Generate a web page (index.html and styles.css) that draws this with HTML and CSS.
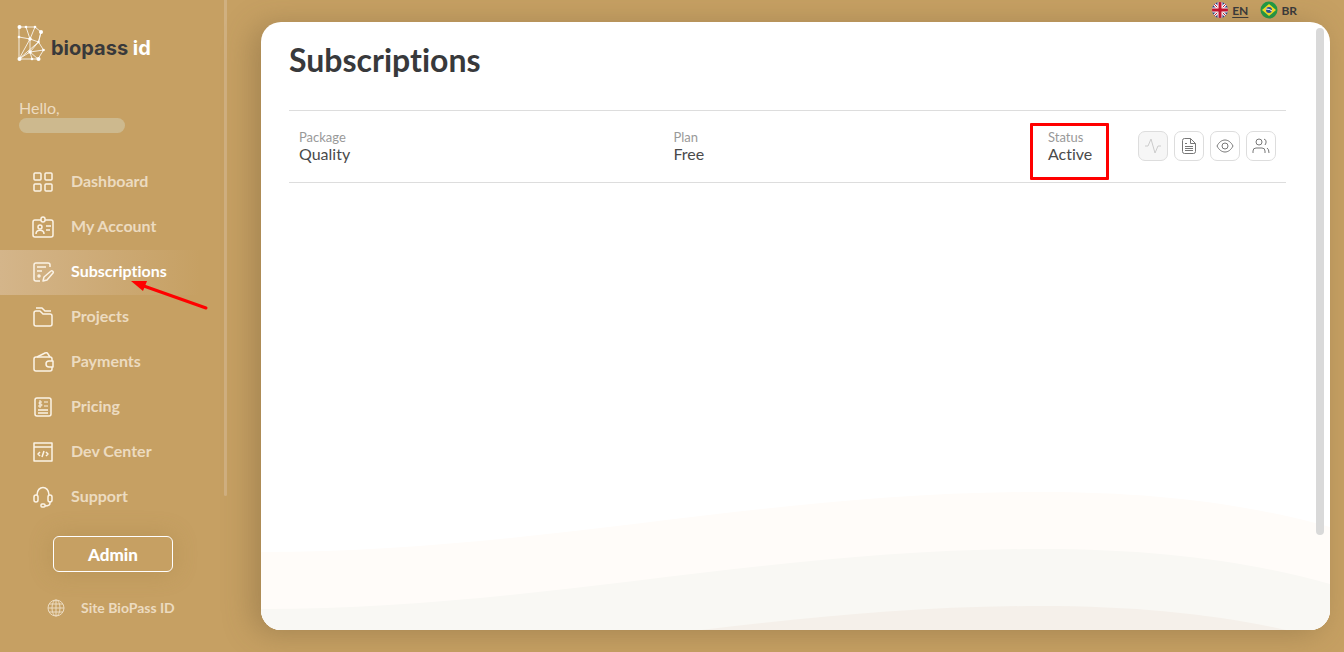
FILE: index.html
```html
<!DOCTYPE html>
<html lang="en">

<head>
    <meta charset="UTF-8">
    <meta name="viewport" content="width=device-width, initial-scale=1.0">
    <title>Subscriptions - BioPass ID</title>
    <link rel="stylesheet" href="styles.css">
</head>

<body>
    <aside class="sidebar">
        <a class="logo" href="#">
            <svg class="logo-mark" viewBox="0 0 28 38" aria-hidden="true">
                <path d="M2 3H18L24 8L21.500 18L26.500 26L21 35H2ZM2 13L13 15L9 3M2 35L13 15L18 3M13 15L21.500 18L2 35L13 28L26.500 26M13 15V28L15 35M13 28L21 35M13 28L21.500 18L24 8" fill="none" stroke="#fff" stroke-opacity=".8" stroke-width="1"/>
                <g fill="#fff">
                    <circle cx="2.500" cy="3" r="2"/><circle cx="9" cy="3" r="1.300"/><circle cx="18" cy="3" r="1.300"/><circle cx="24" cy="8" r="2"/>
                    <circle cx="2" cy="13" r="1.300"/><circle cx="13" cy="15" r="1.800"/><circle cx="21.500" cy="18" r="1.200"/><circle cx="26.500" cy="26" r="1.300"/>
                    <circle cx="13" cy="28" r="1.800"/><circle cx="2.500" cy="35" r="2"/><circle cx="15" cy="35" r="1.300"/><circle cx="21.500" cy="35" r="2"/>
                </g>
            </svg>
            <span class="logo-text">biopass <span>id</span></span>
        </a>

        <div class="user">
            <p>Hello,</p>
            <div class="user-name"></div>
        </div>

        <nav class="menu">
            <a href="#">
                <svg viewBox="0 0 22 22"><rect x="2" y="2" width="7" height="7" rx="1"/><rect x="13" y="2" width="7" height="7" rx="1"/><rect x="2" y="13" width="7" height="7" rx="1"/><rect x="13" y="13" width="7" height="7" rx="1"/></svg>
                Dashboard
            </a>
            <a href="#">
                <svg viewBox="0 0 22 22"><path d="M9 4H3a2 2 0 0 0-2 2v13a2 2 0 0 0 2 2h16a2 2 0 0 0 2-2V6a2 2 0 0 0-2-2h-6"/><rect x="9" y="1" width="4" height="5" rx="2"/><circle cx="8" cy="11" r="2"/><path d="M4 18c0-5 8-5 8 0M14 10h5M14 14h4"/></svg>
                My Account
            </a>
            <a href="#" class="active">
                <svg viewBox="0 0 22 22"><path d="M18 6V4a2 2 0 0 0-2-2H4a2 2 0 0 0-2 2v14a2 2 0 0 0 2 2h4M5 6h9M5 10h5"/><circle cx="7" cy="15" r="1"/><path d="M11 20l1-4 7-6c1-1 3 1 2 2l-6 7z"/></svg>
                Subscriptions
                <svg class="arrow" viewBox="0 0 78 30" aria-hidden="true"><path class="arrow-line" d="M10 5L75 28"/><path class="arrow-head" d="M0 1L16 1L12 11Z"/></svg>
            </a>
            <a href="#">
                <svg viewBox="0 0 22 22"><path d="M2 7a2 2 0 0 1 2-2h4l3 3h7a2 2 0 0 1 2 2v8a2 2 0 0 1-2 2H4a2 2 0 0 1-2-2zM4 2h6l3 3h6"/></svg>
                Projects
            </a>
            <a href="#">
                <svg viewBox="0 0 22 22"><rect x="2" y="6" width="18" height="14" rx="2"/><path d="M5 6l8-4q2-1 3 1l2 3"/><path class="pouch" d="M21 10v6h-4a3 3 0 0 1 0-6z"/></svg>
                Payments
            </a>
            <a href="#">
                <svg viewBox="0 0 22 22"><rect x="3" y="2" width="16" height="18" rx="2"/><path d="M6 14h10M6 17h10"/><path class="thin" d="M10 6H8a1 1 0 0 0-1 1q0 1 1 1h1q1 0 1 1t-1 1H6M8 4v8M12 6h4M12 10h4"/></svg>
                Pricing
            </a>
            <a href="#">
                <svg viewBox="0 0 22 22"><rect x="2" y="2" width="18" height="18"/><path d="M2 6h18M8 11l-2 2 2 2M14 11l2 2-2 2M12 10l-2 6"/></svg>
                Dev Center
            </a>
            <a href="#">
                <svg viewBox="0 0 22 22"><path d="M5 9c0-10 12-10 12 0M18 15v2q0 3-5 3"/><rect x="2" y="9" width="4" height="7" rx="2"/><rect x="16" y="9" width="4" height="7" rx="2"/><rect x="9" y="18" width="4" height="3" rx="1"/></svg>
                Support
            </a>
        </nav>

        <button class="admin" type="button">Admin</button>

        <a class="site-link" href="#">
            <svg viewBox="0 0 18 18"><circle cx="9" cy="9" r="8"/><ellipse cx="9" cy="9" rx="4" ry="8"/><path d="M9 1v16M1 9h16M2 5h14M2 13h14"/></svg>
            Site BioPass ID
        </a>
        <div class="sidebar-scroll"></div>
    </aside>

    <main class="content">
        <div class="languages">
            <a class="selected" href="#">
                <svg viewBox="0 0 18 18" aria-hidden="true">
                    <clipPath id="round"><circle cx="9" cy="9" r="8"/></clipPath>
                    <g clip-path="url(#round)">
                        <path d="M0 0h18v18H0z" fill="#293f86"/>
                        <path d="M0 0l18 18M18 0L0 18" stroke="#fff" stroke-width="3"/>
                        <path d="M0 0l18 18M18 0L0 18" stroke="#c8102e"/>
                        <path d="M9 0v18M0 9h18" stroke="#fff" stroke-width="5"/>
                        <path d="M9 0v18M0 9h18" stroke="#c8102e" stroke-width="3"/>
                    </g>
                </svg>
                <span>EN</span>
            </a>
            <a href="#">
                <svg viewBox="0 0 18 18" aria-hidden="true">
                    <circle cx="9" cy="9" r="8.500" fill="#229a45"/>
                    <path d="M9 3l7 6-7 6-7-6z" fill="#f8df24"/>
                    <circle cx="9" cy="9" r="3" fill="#29509b"/>
                    <path d="M6 8q4 0 6 2" stroke="#fff" fill="none"/>
                </svg>
                <span>BR</span>
            </a>
        </div>

        <section class="panel">
            <svg class="waves" viewBox="0 0 1069 150" preserveAspectRatio="none" aria-hidden="true">
                <path fill="#fffcf9" d="M0 72C280 72 500 12 779 12C900 12 990 25 1069 47V150H0Z"/>
                <path fill="#f9f8f4" d="M0 129C280 129 500 69 779 69C900 69 990 82 1069 104V150H0Z"/>
                <path fill="#f5f0ea" d="M0 186C280 186 500 126 779 126C900 126 990 139 1069 161Z"/>
            </svg>

            <h1>Subscriptions</h1>

            <div class="subscription">
                <dl>
                    <div>
                        <dt>Package</dt>
                        <dd>Quality</dd>
                    </div>
                    <div>
                        <dt>Plan</dt>
                        <dd>Free</dd>
                    </div>
                    <div class="status">
                        <dt>Status</dt>
                        <dd>Active</dd>
                    </div>
                </dl>
                <div class="actions">
                    <button type="button" aria-label="Activity" disabled>
                        <svg viewBox="0 0 18 18"><path d="M1 9h3l3-7 4 14 3-7h3"/></svg>
                    </button>
                    <button type="button" aria-label="Details">
                        <svg viewBox="0 0 18 18"><path d="M10.500 1.500H4.500a2 2 0 0 0-2 2v11a2 2 0 0 0 2 2h9a2 2 0 0 0 2-2v-8zM10.500 1.500v5h5M5 6.500h2M5 9.500h8M5 11.500h8M5 13.500h8"/></svg>
                    </button>
                    <button type="button" aria-label="View">
                        <svg viewBox="0 0 18 18"><path d="M1 9c4-8 12-8 16 0-4 8-12 8-16 0z"/><circle cx="9" cy="9" r="3"/></svg>
                    </button>
                    <button type="button" aria-label="Users">
                        <svg viewBox="0 0 18 18"><circle cx="7" cy="5" r="3"/><path d="M1 16v-2q0-3 3-3h6q3 0 3 3v2M12 2q3 1 2 4l-1 2M15 11q2 1 2 5"/></svg>
                    </button>
                </div>
            </div>
            <div class="panel-scroll"></div>
        </section>
    </main>
</body>

</html>
```
FILE: styles.css
```css
* {
    box-sizing: border-box;
}

body {
    display: flex;
    min-height: 100vh;
    margin: 0;
    background-color: #c6a063;
    color: #38393b;
    font-family: Lato, "Liberation Sans", sans-serif;
    font-variant-ligatures: none;
}

a {
    color: inherit;
    text-decoration: none;
}

svg {
    display: block;
}

/* Sidebar */
.sidebar {
    position: relative;
    display: flex;
    flex-direction: column;
    flex-shrink: 0;
    width: 227px;
    color: #ecdbc0;
}

.logo {
    display: flex;
    align-items: center;
    height: 38px;
    margin: 24px 0 0 17px;
}

.logo-mark {
    width: 28px;
    height: 38px;
}

.logo-text {
    margin: 10px 0 0 6px;
    color: #38393b;
    font-family: Inter, sans-serif;
    font-size: 20px;
    font-weight: 700;
    line-height: 24px;
}

.logo-text span {
    color: #fff;
}

.user {
    height: 98px;
    padding: 36px 0 0 19px;
}

.user p {
    margin: 0;
    font-size: 16px;
    line-height: 20px;
}

.user-name {
    width: 106px;
    height: 15px;
    background-color: #cdb98e;
    border-radius: 8px;
}

.menu a {
    position: relative;
    display: flex;
    align-items: center;
    gap: 17px;
    height: 45px;
    padding: 0 0 4px 32px;
    font-size: 16px;
    font-weight: 700;
}

.menu svg {
    width: 22px;
    height: 22px;
    margin-top: 3px;
    fill: none;
    stroke: #fbf3e6;
    stroke-width: 1.5;
    stroke-linejoin: round;
}

.menu .thin {
    stroke-width: 1;
}

.menu .pouch {
    fill: #c6a063;
}

.menu .active {
    color: #fff;
    background: linear-gradient(to right, #d4b58a, rgba(198, 160, 99, 0) 200px);
}

/* pointer to the current page */
.menu .arrow {
    position: absolute;
    top: 30px;
    left: 131px;
    z-index: 1;
    width: 78px;
    height: 30px;
    margin: 0;
}

.menu .arrow-line {
    stroke: #f00;
    stroke-width: 3;
    stroke-linecap: round;
}

.menu .arrow-head {
    fill: #f00;
    stroke: none;
}

.admin {
    width: 120px;
    height: 36px;
    margin: 16px 0 0 53px;
    background-color: #c6a063;
    border: 1px solid #fff;
    border-radius: 6px;
    box-shadow: 0 0 25px rgba(150, 120, 60, 0.3);
    color: #fff;
    font-family: inherit;
    font-size: 17px;
    font-weight: 900;
}

.site-link {
    display: flex;
    align-items: center;
    gap: 16px;
    margin: 27px 0 0 47px;
    font-size: 14px;
    font-weight: 700;
    line-height: 18px;
}

.site-link svg {
    width: 18px;
    height: 18px;
    fill: none;
    stroke: currentColor;
}

.sidebar-scroll {
    position: absolute;
    top: 0;
    right: 0;
    width: 3px;
    height: 76%;
    background-color: #d0b080;
    border-radius: 0 0 2px 2px;
}

/* Content */
.content {
    display: flex;
    flex: 1;
    flex-direction: column;
    padding: 0 14px 22px 34px;
}

.languages {
    display: flex;
    justify-content: flex-end;
    gap: 12px;
    height: 22px;
    padding: 0 33px 2px 0;
    font-size: 12px;
    font-weight: 700;
}

.languages a {
    display: flex;
    align-items: center;
    gap: 3px;
}

.languages svg {
    width: 18px;
    height: 18px;
}

.languages .selected {
    text-decoration: underline;
    text-underline-offset: 2px;
}

.panel {
    position: relative;
    flex: 1;
    padding: 20px 44px 20px 28px;
    overflow: hidden;
    background-color: #fff;
    border-radius: 20px;
    box-shadow: -8px 3px 30px rgba(100, 80, 50, 0.35);
}

.waves {
    position: absolute;
    bottom: 0;
    left: 0;
    width: 100%;
    height: 150px;
}

h1 {
    position: relative;
    margin: 0 0 32px;
    font-size: 32px;
    font-weight: 700;
    line-height: 36px;
}

.subscription {
    position: relative;
    display: flex;
    align-items: center;
    height: 73px;
    padding: 0 10px 2px;
    border-top: 1px solid #ddd;
    border-bottom: 1px solid #ddd;
}

dl {
    display: grid;
    flex: 1;
    grid-template-columns: 1fr 1fr 90px;
    margin: 0;
}

dt {
    color: #999;
    font-size: 13px;
    line-height: 16px;
}

dd {
    margin: 0;
    color: #4a4a4a;
    font-size: 16px;
    line-height: 18px;
}

.status {
    position: relative;
}

.status::after {
    content: "";
    position: absolute;
    top: -6px;
    left: -18px;
    box-sizing: border-box;
    width: 79px;
    height: 57px;
    border: 3px solid #f00;
    border-radius: 1px;
}

.actions {
    display: flex;
    gap: 6px;
}

.actions button {
    display: flex;
    align-items: center;
    justify-content: center;
    width: 30px;
    height: 30px;
    padding: 0;
    background-color: #fff;
    border: 1px solid #ddd;
    border-radius: 7px;
    color: #777;
}

.actions button:disabled {
    background-color: #f6f6f6;
    color: #ccc;
}

.actions svg {
    width: 18px;
    height: 18px;
    fill: none;
    stroke: currentColor;
}

.panel-scroll {
    position: absolute;
    top: 6px;
    right: 6px;
    bottom: 95px;
    width: 8px;
    background-color: #d9d9d9;
    border-radius: 4px;
}
```
